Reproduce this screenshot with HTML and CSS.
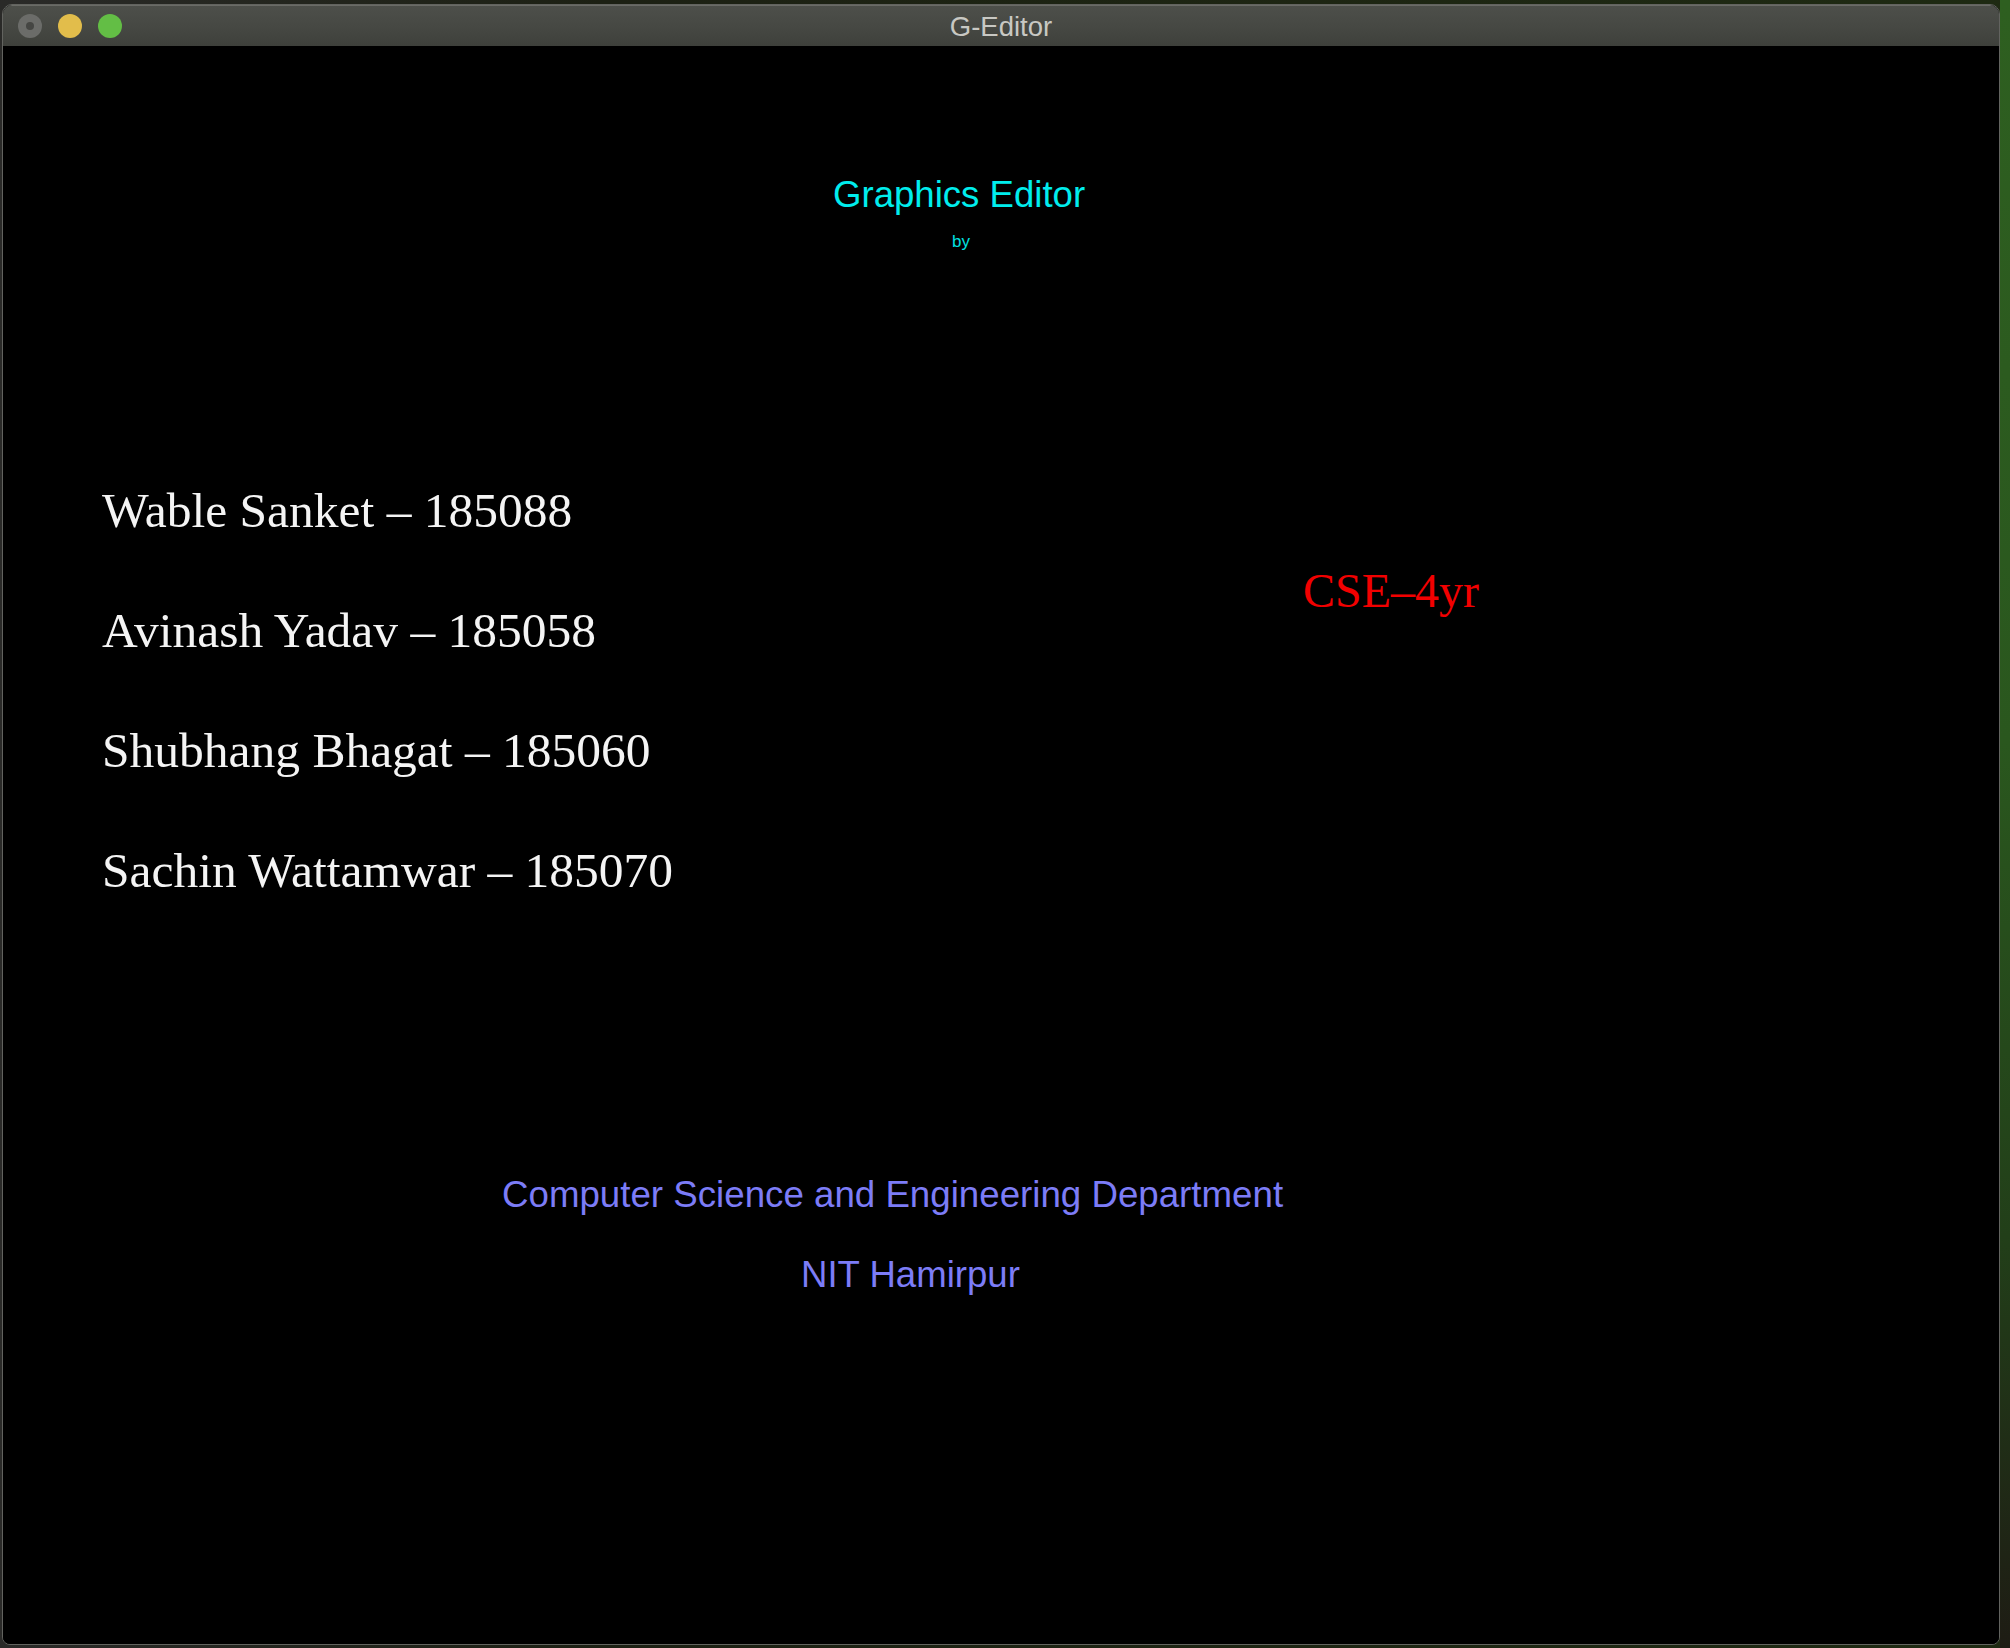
FILE: index.html
```html
<!DOCTYPE html>
<html lang="en">
<head>
<meta charset="utf-8">
<title>G-Editor</title>
<link rel="stylesheet" href="styles.css">
</head>
<body>
<div class="window">
  <div class="titlebar">
    <div class="lights">
      <span class="light light-close"><span class="dot"></span></span>
      <span class="light light-min"></span>
      <span class="light light-max"></span>
    </div>
    <div class="title">G-Editor</div>
    <div class="spacer"></div>
  </div>
  <div class="canvas">
    <div class="heading">Graphics Editor</div>
    <div class="by">by</div>
    <div class="team-row">
      <div class="names">
        <div class="name">Wable Sanket – 185088</div>
        <div class="name">Avinash Yadav – 185058</div>
        <div class="name">Shubhang Bhagat – 185060</div>
        <div class="name">Sachin Wattamwar – 185070</div>
      </div>
      <div class="batch">CSE–4yr</div>
    </div>
    <div class="dept">Computer Science and Engineering Department</div>
    <div class="inst">NIT Hamirpur</div>
  </div>
</div>
</body>
</html>
```
FILE: styles.css
```css
html, body {
  margin: 0;
  padding: 0;
}
body {
  width: 2010px;
  height: 1648px;
  overflow: hidden;
  background:
    linear-gradient(to bottom, #2e5f20 0%, #2a571e 45%, #223f19 75%, #1e1c14 100%) right top / 10px 100% no-repeat,
    linear-gradient(to right, #2a2a28 0, #1c2013 30%, #1e2a12 100%);
}
.window {
  box-sizing: border-box;
  margin: 4px 0 0 2px;
  width: 1998px;
  height: 1641px;
  border: 1px solid #62635f;
  border-radius: 10px 10px 8px 8px;
  overflow: hidden;
  background: #000;
  display: flex;
  flex-direction: column;
}
.titlebar {
  height: 41px;
  flex: 0 0 41px;
  display: grid;
  grid-template-columns: 1fr auto 1fr;
  align-items: center;
  background: linear-gradient(to bottom, #4d4f4a 0%, #454742 60%, #3e403b 100%);
  border-top: 1px solid #6a6b66;
  box-sizing: border-box;
}
.lights {
  display: flex;
  gap: 16px;
  padding-left: 15px;
  align-items: center;
}
.light {
  width: 24px;
  height: 24px;
  border-radius: 50%;
  display: flex;
  align-items: center;
  justify-content: center;
}
.light-close {
  background: #6b6c69;
}
.light-close .dot {
  width: 8px;
  height: 8px;
  border-radius: 50%;
  background: #454643;
}
.light-min {
  background: #e2bd4b;
}
.light-max {
  background: #63be45;
}
.title {
  font-family: "Liberation Sans", Arial, sans-serif;
  font-size: 27.5px;
  line-height: 39px;
  padding-top: 1px;
  color: #c8c8c3;
}
.canvas {
  flex: 1;
  background: #000;
}
.heading {
  margin: 129px 0 0 830px;
  font-family: "Liberation Sans", Arial, sans-serif;
  font-size: 36.6px;
  line-height: 40px;
  color: #00eded;
  white-space: nowrap;
}
.by {
  margin: 17px 0 0 949px;
  font-family: "Liberation Sans", Arial, sans-serif;
  font-size: 17px;
  line-height: 20px;
  color: #00e0e0;
}
.team-row {
  margin-top: 199px;
  padding-left: 99px;
  display: flex;
  align-items: flex-start;
}
.names {
  flex: 0 0 1201px;
  font-family: "Liberation Serif", "Times New Roman", serif;
  font-size: 49.5px;
  line-height: 120px;
  color: #f4f4f4;
  white-space: nowrap;
}
.batch {
  margin-top: 110px;
  font-family: "Liberation Serif", "Times New Roman", serif;
  font-size: 48px;
  line-height: 60px;
  color: #f20000;
  white-space: nowrap;
}
.dept {
  margin: 244px 0 0 499px;
  font-family: "Liberation Sans", Arial, sans-serif;
  font-size: 36.7px;
  line-height: 40px;
  color: #7c7cf7;
  white-space: nowrap;
}
.inst {
  margin: 40px 0 0 798px;
  font-family: "Liberation Sans", Arial, sans-serif;
  font-size: 36.6px;
  line-height: 40px;
  color: #7c7cf7;
  white-space: nowrap;
}
```
